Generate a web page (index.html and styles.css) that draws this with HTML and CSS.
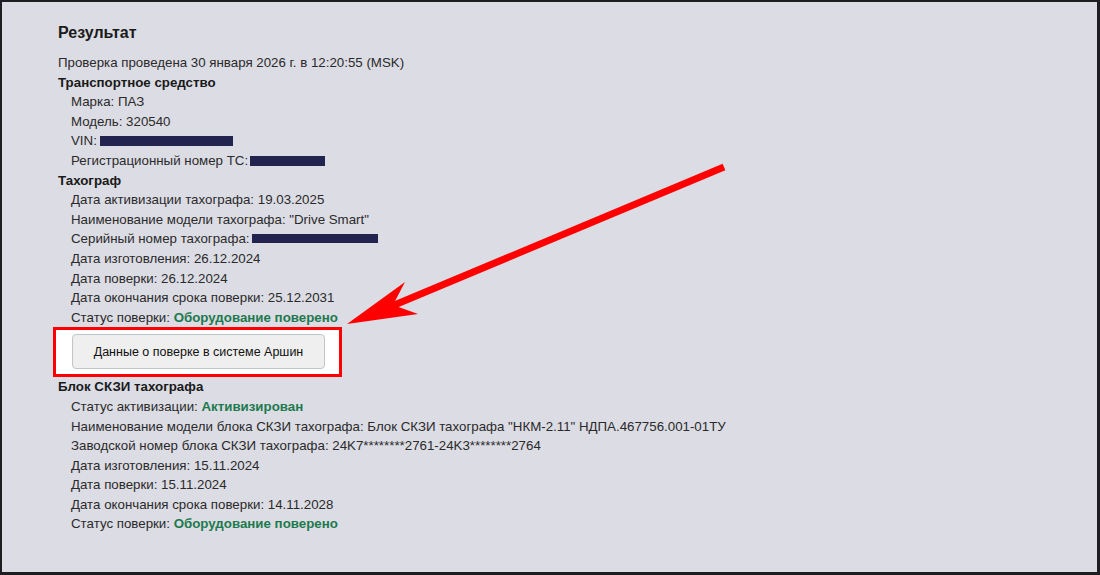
FILE: index.html
```html
<!DOCTYPE html>
<html>
<head>
    <title>Результат проверки тахографа</title>
    <link rel="stylesheet" href="styles.css">
</head>
<body>
    <div class="frame">
        <div class="result">
            <h2>Результат</h2>
            <div class="row">Проверка проведена 30 января 2026 г. в 12:20:55 (MSK)</div>

            <div class="row section">Транспортное средство</div>
            <div class="row item">Марка: ПАЗ</div>
            <div class="row item">Модель: 320540</div>
            <div class="row item">VIN: <span class="hidden vin"></span></div>
            <div class="row item">Регистрационный номер ТС: <span class="hidden reg"></span></div>

            <div class="row section">Тахограф</div>
            <div class="row item">Дата активизации тахографа: 19.03.2025</div>
            <div class="row item">Наименование модели тахографа: "Drive Smart"</div>
            <div class="row item">Серийный номер тахографа:<span class="hidden serial"></span></div>
            <div class="row item">Дата изготовления: 26.12.2024</div>
            <div class="row item">Дата поверки: 26.12.2024</div>
            <div class="row item">Дата окончания срока поверки: 25.12.2031</div>
            <div class="row item">Статус поверки: <b class="ok">Оборудование поверено</b></div>

            <div class="highlight">
                <button class="arshin">Данные о поверке в системе Аршин</button>
            </div>

            <div class="row section">Блок СКЗИ тахографа</div>
            <div class="row item">Статус активизации: <b class="ok">Активизирован</b></div>
            <div class="row item">Наименование модели блока СКЗИ тахографа: Блок СКЗИ тахографа "НКМ-2.11" НДПА.467756.001-01ТУ</div>
            <div class="row item">Заводской номер блока СКЗИ тахографа: 24K7********2761-24K3********2764</div>
            <div class="row item">Дата изготовления: 15.11.2024</div>
            <div class="row item">Дата поверки: 15.11.2024</div>
            <div class="row item">Дата окончания срока поверки: 14.11.2028</div>
            <div class="row item">Статус поверки: <b class="ok">Оборудование поверено</b></div>
        </div>

        <!-- annotation arrow drawn over the page -->
        <svg class="pointer" width="1100" height="575" viewBox="0 0 1100 575">
            <line x1="724" y1="167" x2="392" y2="306" stroke="#ff0000" stroke-width="7"/>
            <polygon points="347,324 405,282 393,305 418,314" fill="#ff0000"/>
        </svg>
    </div>
</body>
</html>
```

FILE: styles.css
```css
html, body { margin: 0; padding: 0; }
body {
    font-family: "Liberation Sans", Arial, sans-serif;
    font-size: 13.3px;
    color: #2a2a2a;
}
.frame {
    position: relative;
    box-sizing: border-box;
    width: 1100px;
    height: 575px;
    background: #dcdce4;
    border: 2px solid #1e1e22;
    border-right-width: 3px;
    border-bottom-width: 3px;
    overflow: hidden;
}
.result { padding: 21px 0 0 56px; }
h2 {
    margin: 0 0 10px 0;
    font-size: 16px;
    line-height: 20px;
    color: #1a1a1a;
}
.row { line-height: 19.6px; white-space: nowrap; }
.section { font-weight: bold; color: #1a1a1a; }
.item { padding-left: 13px; }
.ok { color: #1d7a4e; }
.hidden {
    display: inline-block;
    height: 10px;
    background: #23234f;
    vertical-align: -1px;
}
.vin { width: 133px; margin-left: -1px; }
.reg { width: 75px; margin-left: -2px; }
.serial { width: 126px; height: 9px; vertical-align: 0; margin-left: 2px; }
.highlight {
    box-sizing: border-box;
    width: 289px;
    margin-left: -5px;
    border: 3px solid #ff0000;
    background: #fff;
    padding: 4px 0 5px 16px;
}
.arshin {
    display: block;
    width: 253px;
    height: 35px;
    background: #efefef;
    border: 1px solid #c4c4c4;
    border-radius: 4px;
    font-family: "Liberation Sans", Arial, sans-serif;
    font-size: 12.5px;
    color: #111;
    cursor: pointer;
}
.pointer { position: absolute; left: -2px; top: -2px; }
```
